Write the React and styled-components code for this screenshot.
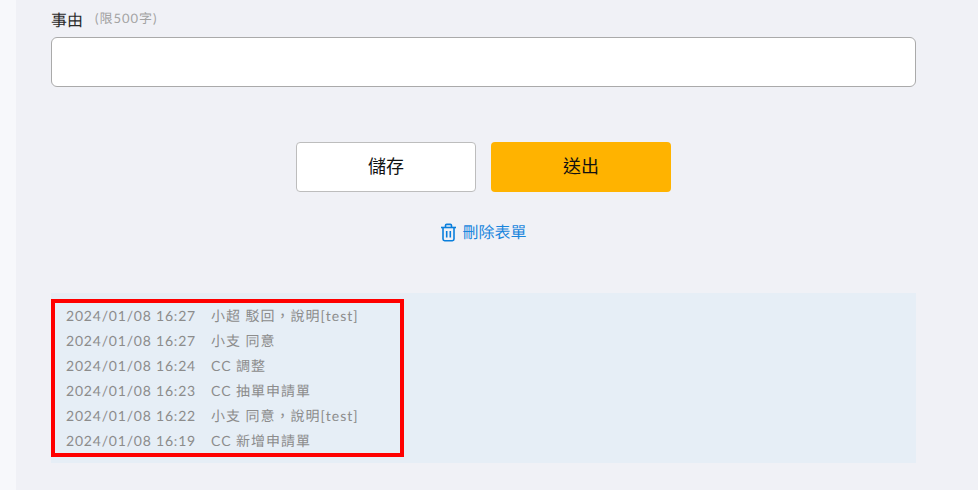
import React from 'react';
import styled, { createGlobalStyle } from 'styled-components';

const GlobalStyle = createGlobalStyle`
    html, body {
        margin: 0;
        padding: 0;
        height: 100%;
        overflow: hidden;
        background: #f7f8fb;
    }
    body {
        font-family: Lato, "Noto Sans CJK TC", sans-serif;
        text-rendering: geometricPrecision;
    }
`;

const Page = styled.div`
    display: flex;
    width: 978px;
    height: 490px;
    overflow: hidden;
`;

const SideStrip = styled.div`
    width: 16px;
    flex-shrink: 0;
    background: #f7f8fb;
`;

const Main = styled.main`
    flex: 1;
    background: #f0f1f6;
    padding: 0 62px 0 35px;
`;

const LabelRow = styled.div`
    display: flex;
    align-items: center;
    height: 37px;
`;

const Label = styled.label`
    font-size: 16px;
    color: #2a2a2a;
    margin-right: 12px;
`;

const Hint = styled.span`
    font-size: 13px;
    color: #a3a3a3;
    letter-spacing: 1px;
    position: relative;
    top: -1px;
`;

const ReasonInput = styled.input`
    display: block;
    box-sizing: border-box;
    width: 100%;
    height: 50px;
    background: #fff;
    border: 1px solid #aaa;
    border-radius: 6px;
    outline: none;
`;

const ButtonRow = styled.div`
    display: flex;
    justify-content: center;
    gap: 15px;
    margin-top: 55px;
`;

const ActionButton = styled.button`
    box-sizing: border-box;
    width: 180px;
    height: 50px;
    border-radius: 4px;
    font-family: inherit;
    font-size: 18px;
    color: #111;
    padding: 0 0 4px;
    background: ${props => props.$primary ? '#ffb300' : '#fff'};
    border: ${props => props.$primary ? 'none' : '1px solid #bdbdbd'};
`;

const DeleteRow = styled.div`
    display: flex;
    justify-content: center;
    margin-top: 27px;
`;

const DeleteLink = styled.a`
    display: flex;
    align-items: center;
    gap: 5px;
    height: 24px;
    margin-bottom: 1px;
    font-size: 16px;
    color: #1a86dd;
`;

const LogPanel = styled.section`
    margin-top: 49px;
    padding: 6px 0;
    background: #e6eef6;
`;

const LogBox = styled.div`
    box-sizing: border-box;
    width: 353px;
    border: 4px solid #ff0000;
    padding: 0 11px;
`;

const LogRow = styled.div`
    display: flex;
    height: 25px;
    line-height: 25px;
    font-size: 14px;
    letter-spacing: 1px;
    color: #8c8c8c;
    white-space: nowrap;
`;

const LogTime = styled.span`
    width: 145px;
    flex-shrink: 0;
    letter-spacing: 0.8px;
`;

const TrashIcon = () => (
    <svg width="17" height="19" viewBox="0 0 17 19" fill="none" stroke="#0a7fdc" strokeWidth="1.6" style={{ marginTop: 3 }}>
        <path d="M1 4.5h15" />
        <path d="M5.5 4.5V2.6c0-.7.5-1.2 1.2-1.2h3.6c.7 0 1.2.5 1.2 1.2v1.9" />
        <path d="M3 4.5v11.6c0 1 .7 1.6 1.6 1.6h7.8c.9 0 1.6-.6 1.6-1.6V4.5" />
        <path d="M6.7 8v6.5M10.3 8v6.5" />
    </svg>
);

const logs = [
    { time: '2024/01/08 16:27', text: '小超 駁回，說明[test]' },
    { time: '2024/01/08 16:27', text: '小支 同意' },
    { time: '2024/01/08 16:24', text: 'CC 調整' },
    { time: '2024/01/08 16:23', text: 'CC 抽單申請單' },
    { time: '2024/01/08 16:22', text: '小支 同意，說明[test]' },
    { time: '2024/01/08 16:19', text: 'CC 新增申請單' },
];

const App = () => (
    <Page>
        <GlobalStyle />
        <SideStrip />
        <Main>
            <LabelRow>
                <Label>事由</Label>
                <Hint>(限500字)</Hint>
            </LabelRow>
            <ReasonInput />
            <ButtonRow>
                <ActionButton>儲存</ActionButton>
                <ActionButton $primary>送出</ActionButton>
            </ButtonRow>
            <DeleteRow>
                <DeleteLink>
                    <TrashIcon />
                    刪除表單
                </DeleteLink>
            </DeleteRow>
            <LogPanel>
                <LogBox>
                    {logs.map((log, i) => (
                        <LogRow key={i}>
                            <LogTime>{log.time}</LogTime>
                            <span>{log.text}</span>
                        </LogRow>
                    ))}
                </LogBox>
            </LogPanel>
        </Main>
    </Page>
);

export default App;
